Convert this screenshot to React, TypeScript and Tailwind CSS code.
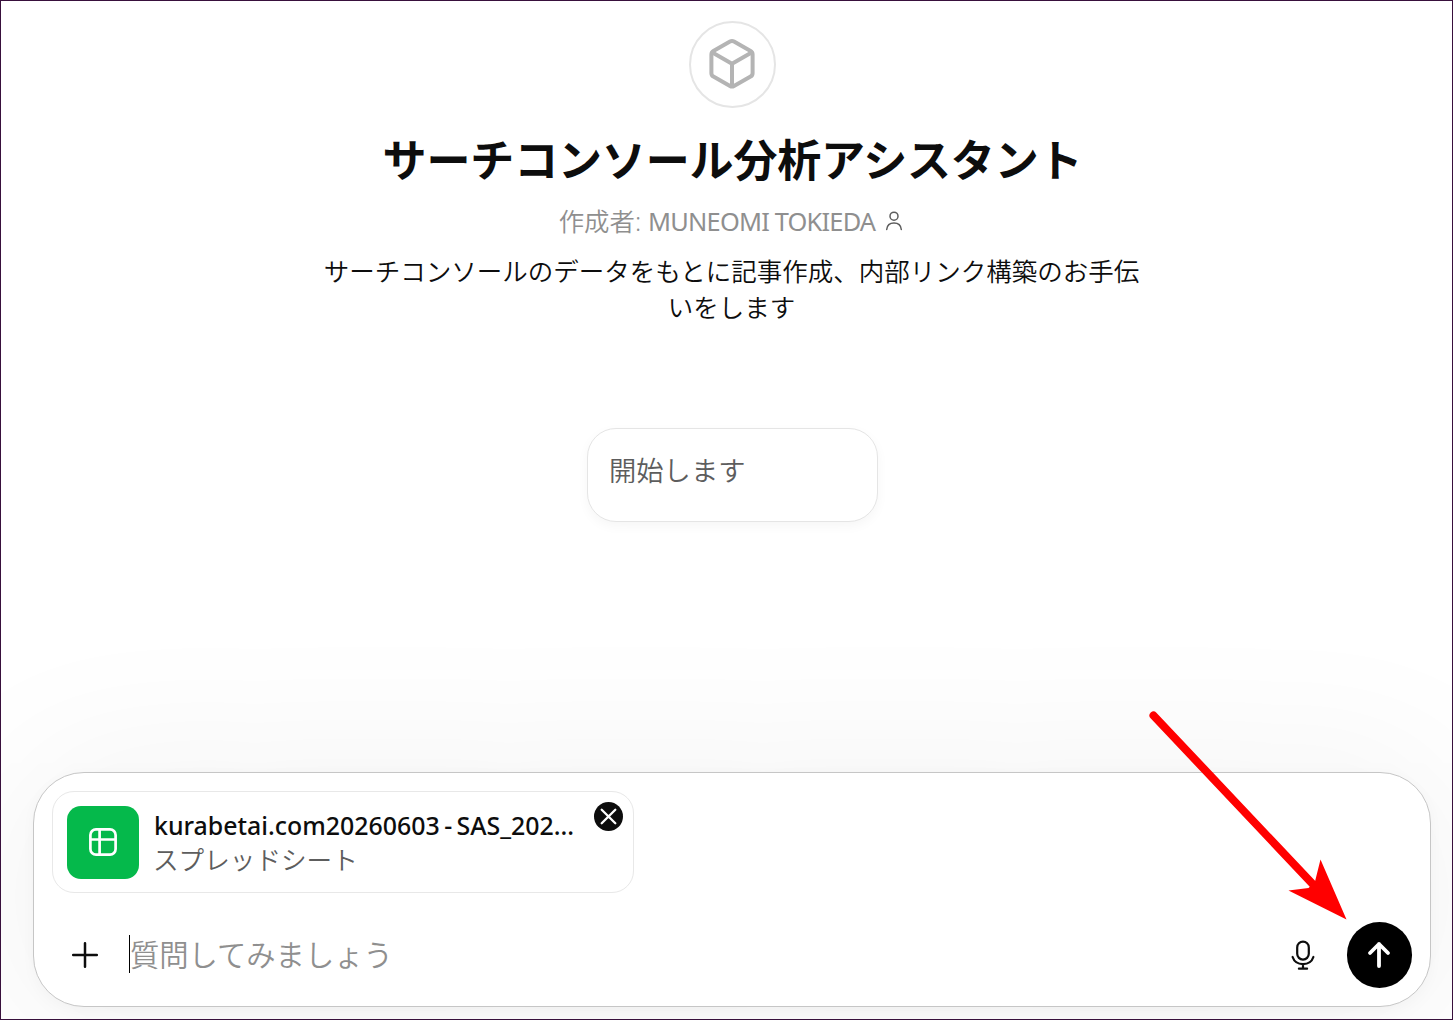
import type { ReactNode } from "react";

const ATTACHMENT = {
  name: "kurabetai.com20260603 - SAS_202...",
  kind: "スプレッドシート",
};

const STARTERS = ["開始します"];

export default function App() {
  return (
    <div className="relative flex h-[1020px] w-[1453px] flex-col overflow-hidden border border-[#38103c] bg-white font-['Noto_Sans','Noto_Sans_CJK_JP',sans-serif] text-[#0d0d0d]">
      <main className="flex flex-1 flex-col items-center pl-[14px] pr-[2px] pt-5">
        <Profile />
        <div className="mt-[104px] flex">
          {STARTERS.map((s) => (
            <Starter key={s}>{s}</Starter>
          ))}
        </div>
      </main>
      <Composer />
      <Pointer />
    </div>
  );
}

function Profile() {
  return (
    <section className="flex flex-col items-center text-center">
      <div className="flex h-[87px] w-[87px] items-start justify-center rounded-full border-2 border-[#e5e5e5] pr-px pt-[16px]">
        <BoxIcon />
      </div>
      <h1 className="mt-[20px] whitespace-nowrap font-['Noto_Sans_CJK_JP',sans-serif] text-[44px] font-bold leading-[60px] tracking-[-0.15px]">
        サーチコンソール分析アシスタント
      </h1>
      <div className="mt-[15px] flex h-9 items-center whitespace-nowrap pr-[3px] text-[25.4px] leading-9 text-[#8f8f8f]">
        <span className="font-[350]">作成者:</span>
        <span className="ml-[7px] tracking-[-0.8px]">MUNEOMI TOKIEDA</span>
        <span className="ml-[10px]">
          <PersonIcon />
        </span>
      </div>
      <p className="mt-[13px] w-[820px] pr-[2px] font-['Noto_Sans_CJK_JP',sans-serif] text-[25.5px] font-[350] leading-9">
        サーチコンソールのデータをもとに記事作成、内部リンク構築のお手伝いをします
      </p>
    </section>
  );
}

function Starter({ children }: { children: ReactNode }) {
  return (
    <button className="flex h-[94px] w-[291px] items-start rounded-[29px] border border-[#e5e5e5] bg-white px-[21px] pt-[22px] text-left text-[27.3px] font-[350] leading-10 text-[#5d5d5d] shadow-[0_4px_12px_rgba(0,0,0,0.04)]">
      {children}
    </button>
  );
}

function Composer() {
  return (
    <form className="mb-3 ml-8 mr-[21px] flex h-[235px] flex-col rounded-[51px] border border-[#c6c6c6] bg-white px-[18px] pt-[18px] shadow-[0_7px_160px_20px_rgba(0,0,0,0.05),0_4px_14px_rgba(0,0,0,0.03)]">
      <Attachment />
      <div className="mt-[29px] flex h-[66px] items-center">
        <button type="button" aria-label="追加" className="ml-[19px]">
          <svg viewBox="0 0 28 28" fill="none" stroke="#0d0d0d" strokeWidth="2.5" strokeLinecap="round" className="h-7 w-7">
            <path d="M14 2.2v23.6M2.2 14h23.6" />
          </svg>
        </button>
        <div className="ml-[30px] flex flex-1 items-center">
          <span className="-mt-[2px] h-[38px] w-px bg-black" />
          <span className="text-[29.3px] font-[350] leading-10 text-[#8f8f8f]">質問してみましょう</span>
        </div>
        <MicIcon />
        <button type="button" aria-label="送信" className="ml-8 flex h-[66px] w-[65px] items-center justify-center rounded-full bg-black pr-px">
          <svg viewBox="0 0 24 28" fill="none" stroke="white" strokeWidth="3.8" strokeLinecap="round" strokeLinejoin="round" className="h-7 w-6">
            <path d="M12 25V3M3 12l9-9 9 9" />
          </svg>
        </button>
      </div>
    </form>
  );
}

function Attachment() {
  return (
    <div className="flex h-[102px] w-[582px] shrink-0 items-center rounded-[22px] border border-[#e8e8e8] pl-[14px] pr-[10px]">
      <div className="flex h-[73px] w-[72px] items-center justify-center rounded-[14px] bg-[#05b94b]">
        <svg viewBox="0 0 28 28" fill="none" stroke="white" strokeWidth="2.7" className="h-7 w-7">
          <rect x="1.4" y="1.4" width="25.2" height="25.2" rx="5.6" />
          <path d="M1.4 11.5h25.2M10.6 1.4v25.2" />
        </svg>
      </div>
      <div className="ml-[15px] flex flex-1 flex-col whitespace-nowrap">
        <span className="text-[24.9px] font-medium leading-9 [word-spacing:-2px]">{ATTACHMENT.name}</span>
        <span className="-ml-px text-[25.6px] font-[350] leading-[35px] text-[#5d5d5d]">{ATTACHMENT.kind}</span>
      </div>
      <button type="button" aria-label="削除" className="mt-[10px] flex h-[29px] w-[29px] items-center justify-center self-start rounded-full bg-[#0d0d0d]">
        <svg viewBox="0 0 17 17" fill="none" stroke="white" strokeWidth="2.3" strokeLinecap="round" className="h-[17px] w-[17px]">
          <path d="M1.7 1.7l13.6 13.6M15.3 1.7L1.7 15.3" />
        </svg>
      </button>
    </div>
  );
}

function BoxIcon() {
  return (
    <svg viewBox="0 0 46 50" fill="none" stroke="#b4b4b4" strokeWidth="4" strokeLinecap="round" strokeLinejoin="round" className="h-[50px] w-[46px]">
      <path d="M21 2.6a4 4 0 0 1 4 0l16.6 9.4a4 4 0 0 1 2 3.5v18.6a4 4 0 0 1-2 3.5L25 47a4 4 0 0 1-4 0L4.4 37.6a4 4 0 0 1-2-3.5V15.5a4 4 0 0 1 2-3.5z" />
      <path d="M3.4 13.5L23 24.8l19.6-11.3M23 24.8V47" />
    </svg>
  );
}

function PersonIcon() {
  return (
    <svg viewBox="0 0 18 20" fill="none" stroke="#5d5d5d" strokeWidth="1.5" strokeLinecap="round" className="h-5 w-[18px]">
      <circle cx="9" cy="5.2" r="4" />
      <path d="M1.7 18.5c.4-4.200 3.500-6.500 7.300-6.500s6.900 2.300 7.300 6.500" />
    </svg>
  );
}

function MicIcon() {
  return (
    <svg viewBox="0 0 24 30" fill="none" stroke="#0d0d0d" strokeWidth="2.2" strokeLinecap="round" className="h-[30px] w-6">
      <rect x="6.2" y="1.6" width="11.6" height="18" rx="5.8" />
      <path d="M1.600 17c1.500 4.500 5.500 7.100 10.400 7.100s8.900-2.600 10.400-7.100M12 24v4.500M7.900 28.700h8.200" />
    </svg>
  );
}

// Hand-drawn callout over the page, aimed at the send button
function Pointer() {
  return (
    <svg viewBox="0 0 200 212" className="pointer-events-none absolute left-[1146px] top-[707px] h-[212px] w-[200px]">
      <path d="M6.5 7.5L168 178.500" stroke="#ff0000" strokeWidth="8" strokeLinecap="round" />
      <path d="M199.500 211.500l-26-60-5.500 22-6.500 6.500-20 2.500z" fill="#ff0000" />
    </svg>
  );
}
